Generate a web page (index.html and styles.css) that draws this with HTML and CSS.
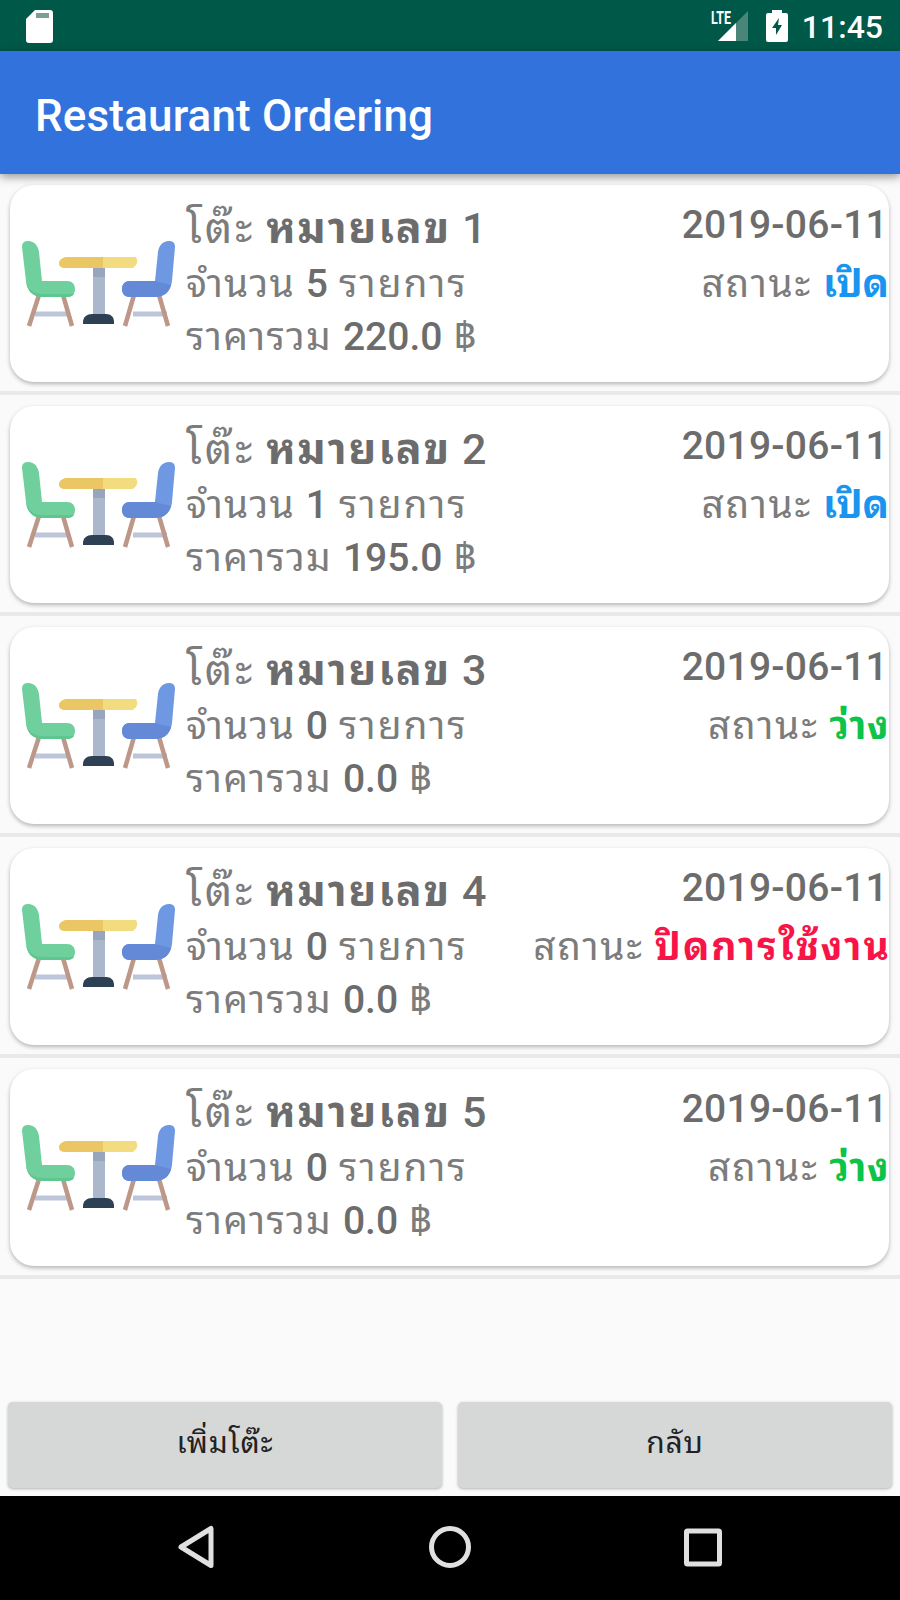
FILE: index.html
```html
<!DOCTYPE html>
<html lang="th">

<head>
    <meta charset="UTF-8">
    <meta name="viewport" content="width=device-width, initial-scale=1.0">
    <title>Restaurant Ordering</title>
    <link rel="stylesheet" href="styles.css">
</head>

<body>
    <!-- Shared table icon -->
    <svg class="defs" width="0" height="0">
        <symbol id="table-icon" viewBox="0 0 154 86">
            <g stroke-linecap="butt">
                <path d="M13 73h34M111 73h34" stroke="#bcc5da" stroke-width="5" />
                <path d="M17 54L7 85M41 54l9 31M112 54l-9 31M137 54l9 31" stroke="#bd9788" stroke-width="4.500" />
            </g>
            <path d="M6 0c7 0 10 5 11 11l3 29h25c5 0 8 3 8 8s-3 8-8 8H21C10 56 5 49 4 40L0 6c0-4 2-6 6-6z" fill="#70d09d" />
            <path d="M4 40c2 8 7 13 17 13h31c-1 2-4 3-7 3H21C10 56 5 49 4 40z" fill="#5fc68f" />
            <path d="M147 0c-7 0-10 5-11 11l-3 29h-25c-5 0-8 3-8 8s3 8 8 8h25c11 0 16-7 17-16l3-34c0-4-2-6-6-6z" fill="#6f98e3" />
            <path d="M133 40h-25c-5 0-8 3-8 8s3 8 8 8h25c9 0 14-5 16-12z" fill="#6489d7" />
            <path d="M71 27h12v48H71z" fill="#abb8cb" />
            <path d="M71 27h12v9H71z" fill="#98a6bd" />
            <path d="M44 16h70c2 4 2 7-3 11H42c-7-1-7-9 2-11z" fill="#f3dc80" />
            <path d="M44 16h37v11H42c-7-1-7-9 2-11z" fill="#eac764" />
            <path d="M70 73h14c5 0 8 3 8 8v2H61v-2c0-5 4-8 9-8z" fill="#2d4054" />
        </symbol>
    </svg>

    <div class="status-bar">
        <svg class="sd-icon" width="28" height="34" viewBox="0 0 28 34">
            <path d="M9 1h15q3 0 3 3v27q0 3-3 3H3q-3 0-3-3V10z" fill="#fff" />
            <path d="M10 4h13v5H10z" fill="#78a096" />
        </svg>
        <div class="status-right">
            <svg class="signal-icon" width="40" height="34" viewBox="0 0 40 34">
                <path d="M39 2v30H9z" fill="#498579" />
                <path d="M27 14v18H9z" fill="#fff" />
                <text class="lte" x="2" y="15" textLength="20" lengthAdjust="spacingAndGlyphs">LTE</text>
            </svg>
            <svg class="battery-icon" width="22" height="32" viewBox="0 0 22 32">
                <path d="M6 0h10v3h4q2 0 2 2v25q0 2-2 2H2q-2 0-2-2V5q0-2 2-2h4z" fill="#fff" />
                <path d="M13 8L6 18h4v7l6-10h-4z" fill="#005849" />
            </svg>
            <span class="clock">11:45</span>
        </div>
    </div>

    <header class="app-bar">
        <h1>Restaurant Ordering</h1>
    </header>

    <main class="table-list" id="tableList"></main>

    <div class="actions">
        <button class="action-button">เพิ่มโต๊ะ</button>
        <button class="action-button">กลับ</button>
    </div>

    <nav class="nav-bar">
        <svg width="44" height="44" viewBox="0 0 44 44"><path d="M36 3.500v37L6 22z" /></svg>
        <svg width="44" height="44" viewBox="0 0 44 44"><circle cx="22" cy="22" r="18.500" /></svg>
        <svg width="44" height="44" viewBox="0 0 44 44"><rect x="5.500" y="6" width="33" height="33" rx="1" /></svg>
    </nav>

    <script>
        const tables = [
            { number: 1, items: 5, total: '220.0', status: 'เปิด', type: 'open' },
            { number: 2, items: 1, total: '195.0', status: 'เปิด', type: 'open' },
            { number: 3, items: 0, total: '0.0', status: 'ว่าง', type: 'free' },
            { number: 4, items: 0, total: '0.0', status: 'ปิดการใช้งาน', type: 'closed' },
            { number: 5, items: 0, total: '0.0', status: 'ว่าง', type: 'free' }
        ];

        // Build one row for each table
        document.getElementById('tableList').innerHTML = tables.map(table => `
            <div class="table-row">
                <div class="card">
                    <svg class="table-icon"><use href="#table-icon"></use></svg>
                    <div class="info">
                        <div class="line name"><span>โต๊ะ</span><b class="label">หมายเลข</b><b>${table.number}</b></div>
                        <div class="line count"><span>จำนวน</span><b>${table.items}</b><span class="items">รายการ</span></div>
                        <div class="line total"><span>ราคารวม</span><b>${table.total}</b><span>฿</span></div>
                    </div>
                    <div class="side">
                        <div class="line date">2019-06-11</div>
                        <div class="line status"><span>สถานะ</span><b class="${table.type}">${table.status}</b></div>
                    </div>
                </div>
            </div>`).join('');
    </script>
</body>

</html>
```
FILE: styles.css
```css
* {
    box-sizing: border-box;
}

body {
    margin: 0;
    width: 900px;
    height: 1600px;
    display: flex;
    flex-direction: column;
    overflow: hidden;
    background-color: #fafafa;
    font-family: Roboto, "Noto Sans Thai Looped", "Noto Sans Thai", "Noto Sans", sans-serif;
    color: #6c6c6c;
}

.defs {
    display: none;
}

.status-bar {
    height: 51px;
    flex: none;
    display: flex;
    justify-content: space-between;
    align-items: flex-start;
    padding: 9px 17px 0 26px;
    background-color: #005849;
    color: #fff;
}

.status-right {
    display: flex;
}

.signal-icon {
    margin-right: 17px;
    overflow: visible;
}

.battery-icon {
    margin: 1px 14px 0 0;
}

.lte {
    font-size: 18px;
    font-weight: 700;
    fill: #fff;
}

.clock {
    font-size: 32px;
    font-weight: 500;
    line-height: 36px;
}

.app-bar {
    height: 123px;
    flex: none;
    padding: 0 35px;
    background-color: #3272dc;
    box-shadow: 0 3px 9px rgba(0, 0, 0, 0.4);
    position: relative;
}

.app-bar h1 {
    margin: 0;
    font-size: 44px;
    font-weight: 500;
    line-height: 130px;
    letter-spacing: 0.150px;
    color: #fff;
}

.table-list {
    flex: 1;
}

.table-row {
    height: 221px;
    padding: 11px 11px 0 10px;
    border-bottom: 4px solid #e9e9e9;
}

.card {
    height: 197px;
    display: flex;
    padding-left: 12px;
    background-color: #fff;
    border-radius: 24px;
    box-shadow: 0 2px 4px rgba(0, 0, 0, 0.28);
}

.table-icon {
    width: 154px;
    height: 86px;
    margin-top: 56px;
    flex: none;
}

.info {
    padding: 11px 0 0 10px;
    flex: none;
}

.line {
    display: flex;
    gap: 11px;
    height: 53px;
    line-height: 53px;
    font-size: 39px;
    white-space: nowrap;
}

.line span {
    color: #7c7c7c;
}

.line b {
    font-weight: 500;
}

.name {
    height: 62px;
    line-height: 64px;
    font-size: 43px;
}

.name span {
    letter-spacing: 2.800px;
}

.name .label {
    font-weight: 700;
    letter-spacing: 1.900px;
}

.count span {
    letter-spacing: 1.100px;
}

.count .items {
    letter-spacing: 1.900px;
}

.total span {
    letter-spacing: 1.200px;
}

.side {
    margin-left: auto;
    padding-top: 14px;
}

.side .line {
    justify-content: flex-end;
}

.side .date {
    height: 59px;
    padding-right: 1px;
    font-weight: 500;
    letter-spacing: 0.250px;
}

.status span {
    letter-spacing: 1.700px;
}

.status b {
    font-weight: 700;
}

.line .open {
    color: #1995ef;
}

.line .free {
    color: #0dc34a;
    letter-spacing: 0.500px;
}

.line .closed {
    margin-right: -2px;
    color: #f91447;
    letter-spacing: 2px;
}

.actions {
    display: flex;
    gap: 16px;
    padding: 0 8px 8px 8px;
}

.action-button {
    flex: 1;
    height: 86px;
    padding: 0 0 11px;
    border: none;
    border-radius: 5px;
    background-color: #d6d8d7;
    box-shadow: 0 1px 3px rgba(0, 0, 0, 0.3);
    font-family: inherit;
    font-size: 30px;
    font-weight: 400;
    letter-spacing: 0.800px;
    color: #222;
}

.nav-bar {
    height: 104px;
    flex: none;
    display: flex;
    justify-content: center;
    gap: 209px;
    padding-top: 29px;
    background-color: #000;
}

.nav-bar svg {
    fill: none;
    stroke: #e0e0e0;
    stroke-width: 5;
    stroke-linejoin: round;
}
```
